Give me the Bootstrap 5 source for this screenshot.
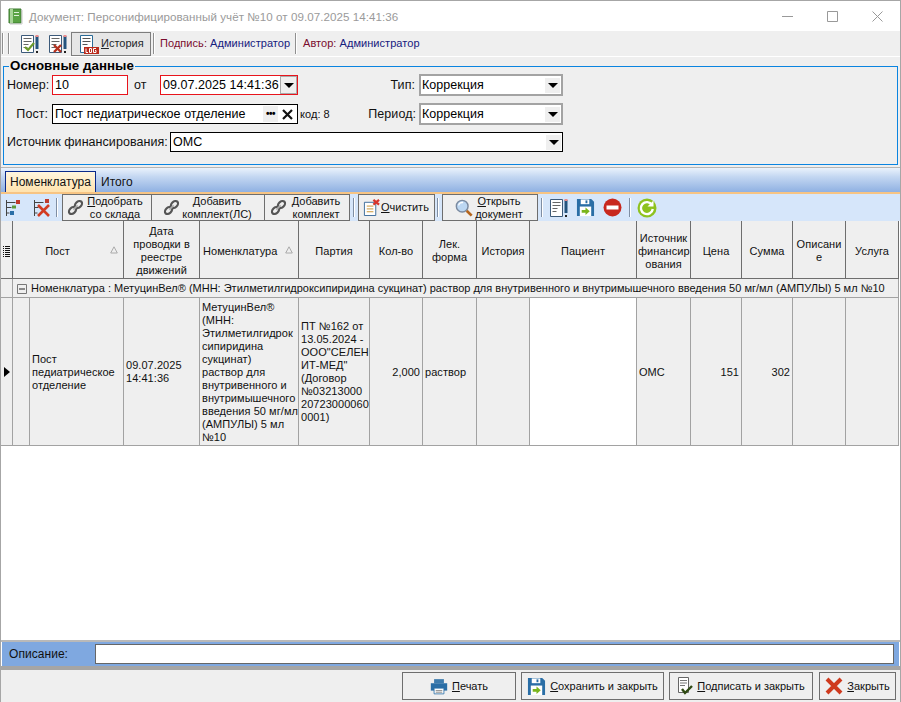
<!DOCTYPE html>
<html lang="ru"><head><meta charset="utf-8"><title>Документ</title>
<link href="https://cdn.jsdelivr.net/npm/bootstrap@5.3.0/dist/css/bootstrap.min.css" rel="stylesheet">
<style>
html,body{margin:0;height:702px;overflow:hidden;background:#fff}
body{font:11px/13px "Liberation Sans",sans-serif;color:#111;letter-spacing:.05px}
u{text-underline-offset:1px}
.win{width:901px;height:702px;border:1px solid #a6a6a6;border-bottom:0;display:flex;flex-direction:column;background:#fff;overflow:hidden}
.titlebar{height:30px;flex:none;padding-left:6px;color:#9a9a9a;font-size:11.6px}
.titlebar .ttl{margin-left:6px}
.wbtns{margin-left:auto;gap:34px;padding-right:17px}
.tb1{flex:none;background:#efefef;border-bottom:1px solid #fff;padding-left:1px;box-sizing:content-box;height:25px}
.vsep{width:2px;align-self:stretch;margin:2px 0;background:#8f8f8f;border-right:1px solid #fff;flex:none}
.hist{width:80px;height:24px;margin-left:3px;background:#e6e6e6;border:1px solid #7d7d7d;gap:0;padding:0 0 0 7px;font-size:11px;white-space:nowrap}
.sig{color:#7a0c2e;white-space:nowrap}.sig b{font-weight:400;color:#16207e}
.grp{margin:0 2px;padding:0 0 8px 3px;height:106px;background:#efefef;border:1px solid #0a84e0;min-width:0;flex:none}
.grp legend{float:none;width:auto;font:700 13.3px/14px "Liberation Sans",sans-serif;margin:0 0 0 2px;padding:0 1px;color:#000}
.grp-bg{background:#efefef;flex:none;height:110px;padding-top:2px}
.frow{display:flex;align-items:center}
.r1{height:22px;margin-top:1px}.r2{height:22px;margin-top:7px}.r3{height:22px;margin-top:6px}
.fld{background:#fff;height:20px;border:1px solid #000;display:flex;align-items:center;padding-left:2px;font-size:12.5px;flex:none;color:#000;white-space:nowrap}
.fld.red{border-color:#e8141c}.fld.gr{border:2px solid #a3a3a3;height:22px;padding-left:1px}
.lab{flex:none;font-size:12.5px;white-space:nowrap}
.ddb{margin-left:auto;width:15px;height:15px;background:#efefef;display:flex;align-items:center;justify-content:center;margin-right:1px}
.ddb i{width:0;height:0;border:5px solid transparent;border-top:5px solid #000;border-bottom:0;display:block}
.tabs{flex:none;border-top:1px solid #b5b5b5;background:linear-gradient(#eaf2fc,#c5d8f2 35%,#8fb1e2);padding:3px 0 0 4px;box-sizing:content-box;height:21px}
.tabon{width:91px;height:21px;background:linear-gradient(#fff6df,#ffe2ad);border:1px solid #0b2a8a;border-bottom:0;text-align:center;line-height:21px;font-size:12px;padding:0}
.taboff{padding:0 0 0 5px;line-height:23px;font-size:12px}
.orange{height:2px;flex:none;background:#f7c483}
.tb2{height:27px;flex:none;background:#d6e6fa;padding-left:4px}
.tb2 .vsep{margin:4px 0;background:#7f8ea3}
.tbtn{height:27px;background:#efefef;border:1px solid #6e6e6e;padding:0;display:flex;align-items:center;font-size:11px;line-height:13px;color:#111;text-align:center;border-radius:0;flex:none;white-space:nowrap}
.tbtn:hover{background:#efefef}
.gridwrap{flex:1 1 auto;min-height:0;background:#fff;border-bottom:2px solid #b9b9b9}
.dg{table-layout:fixed;width:898px;border-collapse:separate;border-spacing:0;margin:0;font-size:11px;line-height:13px;--bs-table-bg:transparent;color:#111}
.dg th,.dg td{padding:1px 2px 0;font-weight:400;border-right:1px solid #a2a2a2;border-bottom:1px solid #a2a2a2;background:#efefef;vertical-align:middle;overflow:hidden;box-sizing:border-box}
.dg th{height:58px;text-align:center;border-right-color:#6e6e6e;border-bottom-color:#6e6e6e;position:relative;padding:3px 1px 0}
.dg th.hpost{padding-right:22px}
.dg .gr td{height:19px;white-space:nowrap;padding:0 0 0 2px;letter-spacing:0}
.dg .dt td{height:148px;white-space:nowrap}
.dg td.wh{background:#fff}
.sorti{position:absolute;right:5px;top:25px}
.descbar{height:24px;flex:none;margin:0 0 0 1px;background:#7fa8e0;padding-left:7px;font-size:12px;width:897px}
.descin{margin-left:auto;margin-right:5px;width:799px;height:20px;background:#fff;border:1px solid #666}
.grayline{height:4px;flex:none;background:#a5a5a5}
.foot{height:32px;flex:none;background:#efefef;padding:2px 0 0 401px;gap:5px}
.fbtn{height:28px;background:#efefef;border:1px solid #6e6e6e;padding:0;font-size:11px;color:#111;border-radius:0;display:flex;align-items:center;justify-content:center;gap:4px;flex:none;white-space:nowrap}
.fbtn:hover{background:#efefef}
</style></head><body>
<svg width="0" height="0" class="d-none"><defs>
<symbol id="doc" viewBox="0 0 20 20"><path d="M1.500 1.500h12v17h-12z" fill="#fff" stroke="#3c5a7a"/><path d="M3.500 4.500h8M3.500 7.500h8M3.500 10.500h5M3.500 13.500h4" stroke="#666"/><path d="M15.500 2h3v13h-3z" fill="#24547e"/><path d="M15.500 1h3v2h-3z" fill="#ea8a8a"/><path d="M16 17h2v2h-2z" fill="#222"/></symbol>
<symbol id="sv" viewBox="0 0 20 20"><path d="M1 1h15l3 3v15H1z" fill="#2a6ea6"/><path d="M5 1.500h9v5H5z" fill="#fff"/><path d="M10 2.500h2v3h-2z" fill="#2a6ea6"/><path d="M4 9h12v10H4z" fill="#fff"/><path d="M6 12.500h4V10l4.500 4-4.500 4v-2.500H6z" fill="#7ab51d"/></symbol>
<symbol id="cn" viewBox="0 0 20 20"><g fill="none" stroke="#555" stroke-width="2.600"><ellipse transform="rotate(-45 13.500 6.500)" cx="13.500" cy="6.500" rx="4.800" ry="3.400"/><ellipse transform="rotate(-45 6.500 13.500)" cx="6.500" cy="13.500" rx="4.800" ry="3.400"/></g><path d="M7.500 12.500l5-5" stroke="#aaa" stroke-width="1.800"/></symbol>
</defs></svg>
<div class="win">
 <div class="titlebar d-flex align-items-center">
  <svg width="16" height="18" viewBox="0 0 16 18"><path d="M2 2h12v14H2z" fill="#5aa344" stroke="#3c7a30"/><path d="M3 2h3v14H3z" fill="#a8d598"/><path d="M7 5h5v1H7zM7 8h5v1H7z" fill="#dff0d8"/><path d="M14 3h1v14H3v-1" fill="none" stroke="#c8c8c8"/></svg>
  <span class="ttl">Документ: Персонифицированный учёт №10 от 09.07.2025 14:41:36</span>
  <div class="wbtns d-flex align-items-center">
   <svg width="11" height="10" viewBox="0 0 11 10"><path d="M0 5.500h11" stroke="#999"/></svg>
   <svg width="11" height="11" viewBox="0 0 11 11"><path d="M.5.500h10v10H.5z" fill="none" stroke="#999"/></svg>
   <svg width="11" height="11" viewBox="0 0 11 11"><path d="M.5.500l10 10M10.500.500l-10 10" stroke="#999"/></svg>
  </div>
 </div>
 <div class="tb1 d-flex align-items-center">
  <div class="vsep"></div><div class="vsep ms-1" style="margin-right:10px"></div>
  <svg width="20" height="20"><use href="#doc"/><path d="M5 13l3 3 6-7" fill="none" stroke="#6a9a2a" stroke-width="2.200"/></svg>
  <svg class="ms-2" width="20" height="20"><use href="#doc"/><path d="M6 11l7 7M13 11l-7 7" stroke="#b5321f" stroke-width="2.400"/></svg>
  <button class="btn hist d-flex align-items-center rounded-0" type="button">
   <svg width="22" height="20" viewBox="0 0 22 20" class="flex-none"><path d="M1.500 1.500h12v17h-12z" fill="#fff" stroke="#2a6a96"/><path d="M3.500 4.500h8M3.500 7.500h8M3.500 10.500h5" stroke="#555"/><rect x="5" y="13" width="15" height="7" fill="#b82a1c"/><path d="M7 14.500v4h2M10.500 14.500h2v4h-2zM17 14.500h-2.500v4H17v-2h-1" fill="none" stroke="#fff"/></svg>
   <span><u>И</u>стория</span></button>
  <div class="vsep" style="margin-left:2px"></div>
  <span class="sig" style="margin-left:5px;width:135px">Подпись: <b>Администратор</b></span>
  <div class="vsep"></div>
  <span class="sig" style="margin-left:6px">Автор: <b>Администратор</b></span>
 </div>
 <div class="grp-bg">
 <fieldset class="grp">
  <legend>Основные данные</legend>
  <div class="frow r1"><span class="lab" style="width:41px">Номер:</span><div class="fld red" style="width:76px;margin-left:4px">10</div><span class="lab" style="margin-left:6px;width:26px">от</span>
   <div class="fld red" style="width:138px">09.07.2025 14:41:36<span class="ddb" style="margin-right:0;height:18px;width:17px;border:1px solid #aaa"><i></i></span></div>
   <span class="lab text-end" style="width:117px">Тип:</span><div class="fld gr" style="width:144px;margin-left:4px">Коррекция<span class="ddb"><i></i></span></div></div>
  <div class="frow r2"><span class="lab text-end" style="width:41px">Пост:</span><div class="fld" style="width:246px;margin-left:4px">Пост педиатрическое отделение
    <span class="ddb" style="width:15px;height:16px;margin-right:0;font-weight:700;line-height:8px;font-size:10px;letter-spacing:-.5px">•••</span>
    <svg class="mx-1" width="11" height="11" viewBox="0 0 11 11"><path d="M1 1l9 9M10 1l-9 9" stroke="#111" stroke-width="2.200"/></svg></div>
   <span class="lab" style="margin-left:2px;width:50px;font-size:11px">код: 8</span><span class="lab text-end" style="width:66px">Период:</span><div class="fld gr" style="width:144px;margin-left:3px">Коррекция<span class="ddb"><i></i></span></div></div>
  <div class="frow r3"><span class="lab" style="width:159px">Источник финансирования:</span><div class="fld" style="width:393px;margin-left:4px">ОМС<span class="ddb"><i></i></span></div></div>
 </fieldset></div>
 <div class="tabs d-flex"><div class="tabon">Номенклатура</div><div class="taboff">Итого</div></div>
 <div class="orange"></div>
 <div class="tb2 d-flex align-items-center">
  <svg width="18" height="18" viewBox="0 0 18 18"><path d="M1.500 1v16M1.500 3.500h9M1.500 8.500h5M1.500 14h3" stroke="#444" fill="none"/><path d="M11 1h4v4h-4z" fill="#c0392b"/><path d="M7 6.500h4v3H7z" fill="#5a9a3a"/><path d="M5 12h4v4H5z" fill="#2a6ea6"/></svg>
  <svg style="margin-left:10px" width="18" height="18" viewBox="0 0 18 18"><path d="M1.500 1v16M1.500 3.500h9M1.500 8.500h4M1.500 14h3" stroke="#444" fill="none"/><path d="M12 0h4v4h-4z" fill="#c0392b"/><path d="M5 6l11 11M16 6L5 17" stroke="#d23b22" stroke-width="2.600"/></svg>
  <div class="vsep" style="margin-left:5px;margin-right:4px"></div>
  <button class="btn tbtn" style="width:90px" type="button"><svg class="ms-1" width="17" height="17"><use href="#cn"/></svg><span style="margin-left:1px;width:60px"><u>П</u>одобрать<br>со склада</span></button>
  <button class="btn tbtn" style="width:114px;margin-left:-1px" type="button"><svg style="margin-left:11px" width="17" height="17"><use href="#cn"/></svg><span style="width:72px;margin-left:1px"><u>Д</u>обавить<br>комплект(ЛС)</span></button>
  <button class="btn tbtn" style="width:86px;margin-left:-1px" type="button"><svg style="margin-left:5px" width="17" height="17"><use href="#cn"/></svg><span style="width:56px;margin-left:1px"><u>Д</u>обавить<br>комплект</span></button>
  <div class="vsep" style="margin-left:3px;margin-right:3px"></div>
  <button class="btn tbtn" style="width:77px" type="button"><svg class="ms-1" width="17" height="17" viewBox="0 0 18 18"><path d="M1.500 3.500h12v14h-12z" fill="#fff" stroke="#3a6a9a"/><path d="M4 7.500h7M4 10.500h7M4 13.500h7" stroke="#c8912c"/><path d="M11 1l6 5M17 1l-6 5" stroke="#d8342a" stroke-width="2.400"/></svg><span style="margin-left:1px"><u>О</u>чистить</span></button>
  <div class="vsep" style="margin-left:2px;margin-right:3px"></div>
  <button class="btn tbtn" style="width:96px" type="button"><svg style="margin-left:12px" width="18" height="18" viewBox="0 0 20 20"><circle cx="8" cy="8" r="6.500" fill="#bcd7f2" stroke="#7a8aa0" stroke-width="1.600"/><path d="M4 7a4 4 0 0 1 5-3" stroke="#fff" fill="none" stroke-width="1.500"/><path d="M13 13l5.500 5.500" stroke="#b5651d" stroke-width="3"/></svg><span style="width:52px"><u>О</u>ткрыть<br>документ</span></button>
  <div class="vsep" style="margin-left:3px"></div>
  <svg style="margin-left:6px" width="20" height="20"><use href="#doc"/></svg>
  <svg style="margin-left:7px" width="19" height="19"><use href="#sv"/></svg>
  <svg style="margin-left:8px" width="19" height="19" viewBox="0 0 19 19"><circle cx="9.500" cy="9.500" r="9" fill="#c8281e"/><path d="M3.500 7.500h12v4h-12z" fill="#fff"/></svg>
  <div class="vsep" style="margin-left:7px"></div>
  <svg style="margin-left:6px" width="20" height="20" viewBox="0 0 20 20"><circle cx="10" cy="10" r="9.500" fill="#8ec21f"/><path d="M15 7a6 6 0 1 0 .8 4" fill="none" stroke="#fff" stroke-width="2.400"/><path d="M16.500 2.500v6h-6z" fill="#fff"/></svg>
 </div>
 <div class="gridwrap">
  <table class="table dg"><colgroup><col style="width:12px"><col style="width:17px"><col style="width:94px"><col style="width:76px"><col style="width:99px"><col style="width:71px"><col style="width:53px"><col style="width:54px"><col style="width:53px"><col style="width:107px"><col style="width:54px"><col style="width:51px"><col style="width:51px"><col style="width:53px"><col style="width:53px"></colgroup>
  <thead><tr>
   <th><svg width="8" height="11" viewBox="0 0 8 11"><path d="M2 .500h5M2 2.500h5M2 4.500h5M2 6.500h5M2 8.500h5M2 10.500h5M0 .500h1M0 2.500h1M0 4.500h1M0 6.500h1M0 8.500h1M0 10.500h1" stroke="#111"/></svg></th>
   <th colspan="2" class="hpost">Пост<svg class="sorti" width="8" height="8" viewBox="0 0 8 8"><path d="M4 .800L7.300 7H.700z" fill="none" stroke="#aaa"/></svg></th>
   <th>Дата проводки в реестре движений</th>
   <th class="text-start" style="padding-left:3px">Номенклатура<svg class="sorti" width="8" height="8" viewBox="0 0 8 8"><path d="M4 .800L7.300 7H.700z" fill="none" stroke="#aaa"/></svg></th>
   <th>Партия</th><th>Кол-во</th><th>Лек.<br>форма</th><th>История</th><th>Пациент</th><th>Источник<br>финансир<br>ования</th><th>Цена</th><th>Сумма</th><th>Описани<br>е</th><th>Услуга</th>
  </tr></thead>
  <tbody>
   <tr class="gr"><td></td><td colspan="14"><svg width="10" height="10" viewBox="0 0 10 10" style="margin:0 4px 0 2px"><path d="M.500.500h9v9h-9z" fill="#efefef" stroke="#777"/><path d="M2 5h6" stroke="#222"/></svg>Номенклатура : МетуцинВел® (МНН: Этилметилгидроксипиридина сукцинат) раствор для внутривенного и внутримышечного введения 50 мг/мл (АМПУЛЫ) 5 мл №10</td></tr>
   <tr class="dt">
    <td class="text-center" style="padding:0"><svg width="6" height="10" viewBox="0 0 6 10"><path d="M0 0l6 5-6 5z" fill="#000"/></svg></td><td></td>
    <td>Пост<br>педиатрическое<br>отделение</td><td>09.07.2025<br>14:41:36</td>
    <td>МетуцинВел®<br>(МНН:<br>Этилметилгидрок<br>сипиридина<br>сукцинат)<br>раствор для<br>внутривенного и<br>внутримышечного<br>введения 50 мг/мл<br>(АМПУЛЫ) 5 мл<br>№10</td>
    <td>ПТ №162 от<br>13.05.2024 -<br>ООО"СЕЛЕН<br>ИТ-МЕД"<br>(Договор<br>№03213000<br>20723000060<br>0001)</td>
    <td class="text-end">2,000</td><td>раствор</td><td></td><td class="wh"></td><td>ОМС</td><td class="text-end">151</td><td class="text-end">302</td><td></td><td></td>
   </tr>
  </tbody></table>
 </div>
 <div class="descbar d-flex align-items-center">Описание:<div class="descin"></div></div>
 <div class="grayline"></div>
 <div class="foot d-flex">
  <button class="btn fbtn" style="width:114px" type="button"><svg width="18" height="17" viewBox="0 0 22 20"><path d="M5 1h12v5H5z" fill="#3d7bad"/><path d="M1 6h20v9H1z" fill="#2a6ea6"/><path d="M5 12h12v7H5z" fill="#fff" stroke="#2a6ea6"/><path d="M7 15h8M7 17h8" stroke="#777"/></svg><span><u>П</u>ечать</span></button>
  <button class="btn fbtn" style="width:143px" type="button"><svg width="19" height="19"><use href="#sv"/></svg><span><u>С</u>охранить и закрыть</span></button>
  <button class="btn fbtn" style="width:144px" type="button"><svg width="16" height="18" viewBox="0 0 16 18"><path d="M1.500.500h10v15h-10z" fill="#fff" stroke="#666"/><path d="M3 3.500h7M3 6h7M3 8.500h5" stroke="#777"/><path d="M5 12l3 4 7-7" fill="none" stroke="#2f4a12" stroke-width="2.400"/></svg><span><u>П</u>одписать и закрыть</span></button>
  <button class="btn fbtn" style="width:77px;margin-left:1px" type="button"><svg width="18" height="18" viewBox="0 0 18 18"><path d="M2 2l14 14M16 2L2 16" stroke="#cf3a1e" stroke-width="4"/></svg><span><u>З</u>акрыть</span></button>
 </div>
</div>
<script src="https://cdn.jsdelivr.net/npm/bootstrap@5.3.0/dist/js/bootstrap.bundle.min.js"></script>
</body></html>
